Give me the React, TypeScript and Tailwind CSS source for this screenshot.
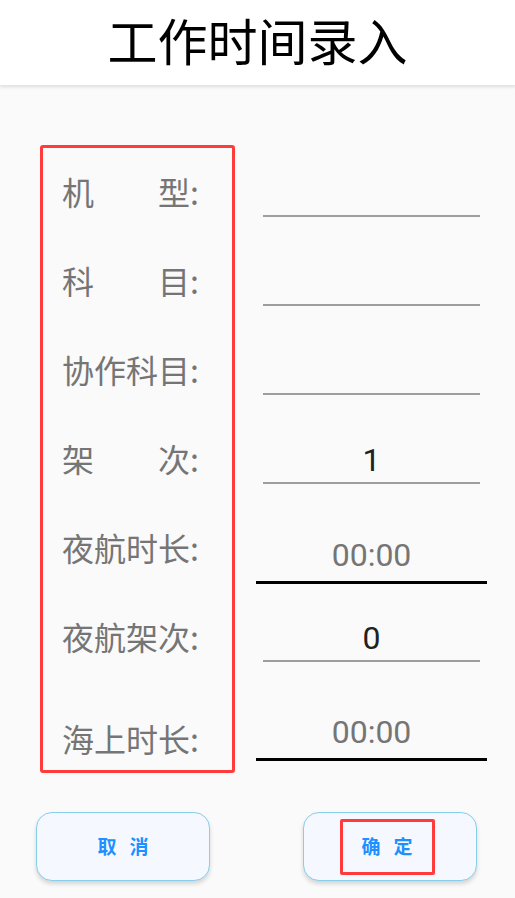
import React from "react";

type Row = {
    label: string;
    value?: string;
    hint?: string;
    wide?: boolean;
};

const rows: Row[] = [
    { label: "机\u3000\u3000型:" },
    { label: "科\u3000\u3000目:" },
    { label: "协作科目:" },
    { label: "架\u3000\u3000次:", value: "1" },
    { label: "夜航时长:", hint: "00:00", wide: true },
    { label: "夜航架次:", value: "0" },
    { label: "海上时长:", hint: "00:00", wide: true },
];

const cjk = { fontFamily: '"Noto Sans CJK SC", "Noto Sans", sans-serif' };
const num = { fontFamily: 'Roboto, "Noto Sans CJK SC", sans-serif' };

export default function App() {
    return (
        <div className="w-[515px] h-[898px] bg-[#fafafa] flex flex-col overflow-hidden" style={cjk}>
            <header className="h-[86px] shrink-0 bg-white flex items-center justify-center shadow-[0_1px_3px_rgba(0,0,0,0.12)] border-b border-[#e6e6e6]">
                <h1 className="text-[50px] leading-[50px] text-black mt-[-8px]">工作时间录入</h1>
            </header>

            <div className="flex items-start mt-[59px]">
                {/* labels */}
                <div className="ml-[40px] w-[195px] border-[3px] border-[#ff3b3b] rounded-[3px] pl-[19px] flex flex-col">
                    {rows.map((row, index) => (
                        <div
                            key={index}
                            className={`flex ${index === 6 ? "h-[88px] items-end pb-[16px]" : "h-[89px] items-center pb-[3px]"}`}
                        >
                            <span className="text-[32px] leading-[32px] text-[#757575] whitespace-pre">{row.label}</span>
                        </div>
                    ))}
                </div>

                {/* inputs */}
                <div className="ml-[21px] w-[231px] pt-[3px] flex flex-col">
                    {rows.map((row, index) => (
                        <div
                            key={index}
                            className={`flex flex-col justify-end ${index === 6 ? "h-[88px]" : "h-[89px]"} ${row.wide ? "pb-[9px]" : "pb-[20px] px-[7px]"}`}
                        >
                            <input
                                readOnly
                                value={row.value ?? ""}
                                placeholder={row.hint}
                                style={num}
                                className={`w-full bg-transparent text-center outline-none text-[32px] text-[#212121] placeholder:text-[#757575] ${row.wide ? "h-[55px] border-b-[3px] border-black" : "h-[46px] border-b-2 border-[#9e9e9e]"}`}
                            />
                        </div>
                    ))}
                </div>
            </div>

            <div className="flex justify-between px-[36px] mt-[39px] pr-[38px]">
                <button className="w-[174px] h-[69px] rounded-[16px] border-[1.5px] border-[#87ceeb] bg-[#f5f8ff] shadow-[0_3px_4px_rgba(0,0,0,0.15)] flex items-center justify-center">
                    <span className="text-[19px] font-bold text-[#1e90ff] tracking-[13px] mr-[-13px]">取消</span>
                </button>
                <button className="w-[174px] h-[69px] rounded-[16px] border-[1.5px] border-[#87ceeb] bg-[#f5f8ff] shadow-[0_3px_4px_rgba(0,0,0,0.15)] flex items-center justify-center">
                    <span className="w-[95px] h-[56px] shrink-0 mr-[6px] border-[3px] border-[#ff3b3b] rounded-[2px] flex items-center justify-center">
                        <span className="text-[19px] font-bold text-[#1e90ff] tracking-[13px] mr-[-13px]">确定</span>
                    </span>
                </button>
            </div>
        </div>
    );
}
